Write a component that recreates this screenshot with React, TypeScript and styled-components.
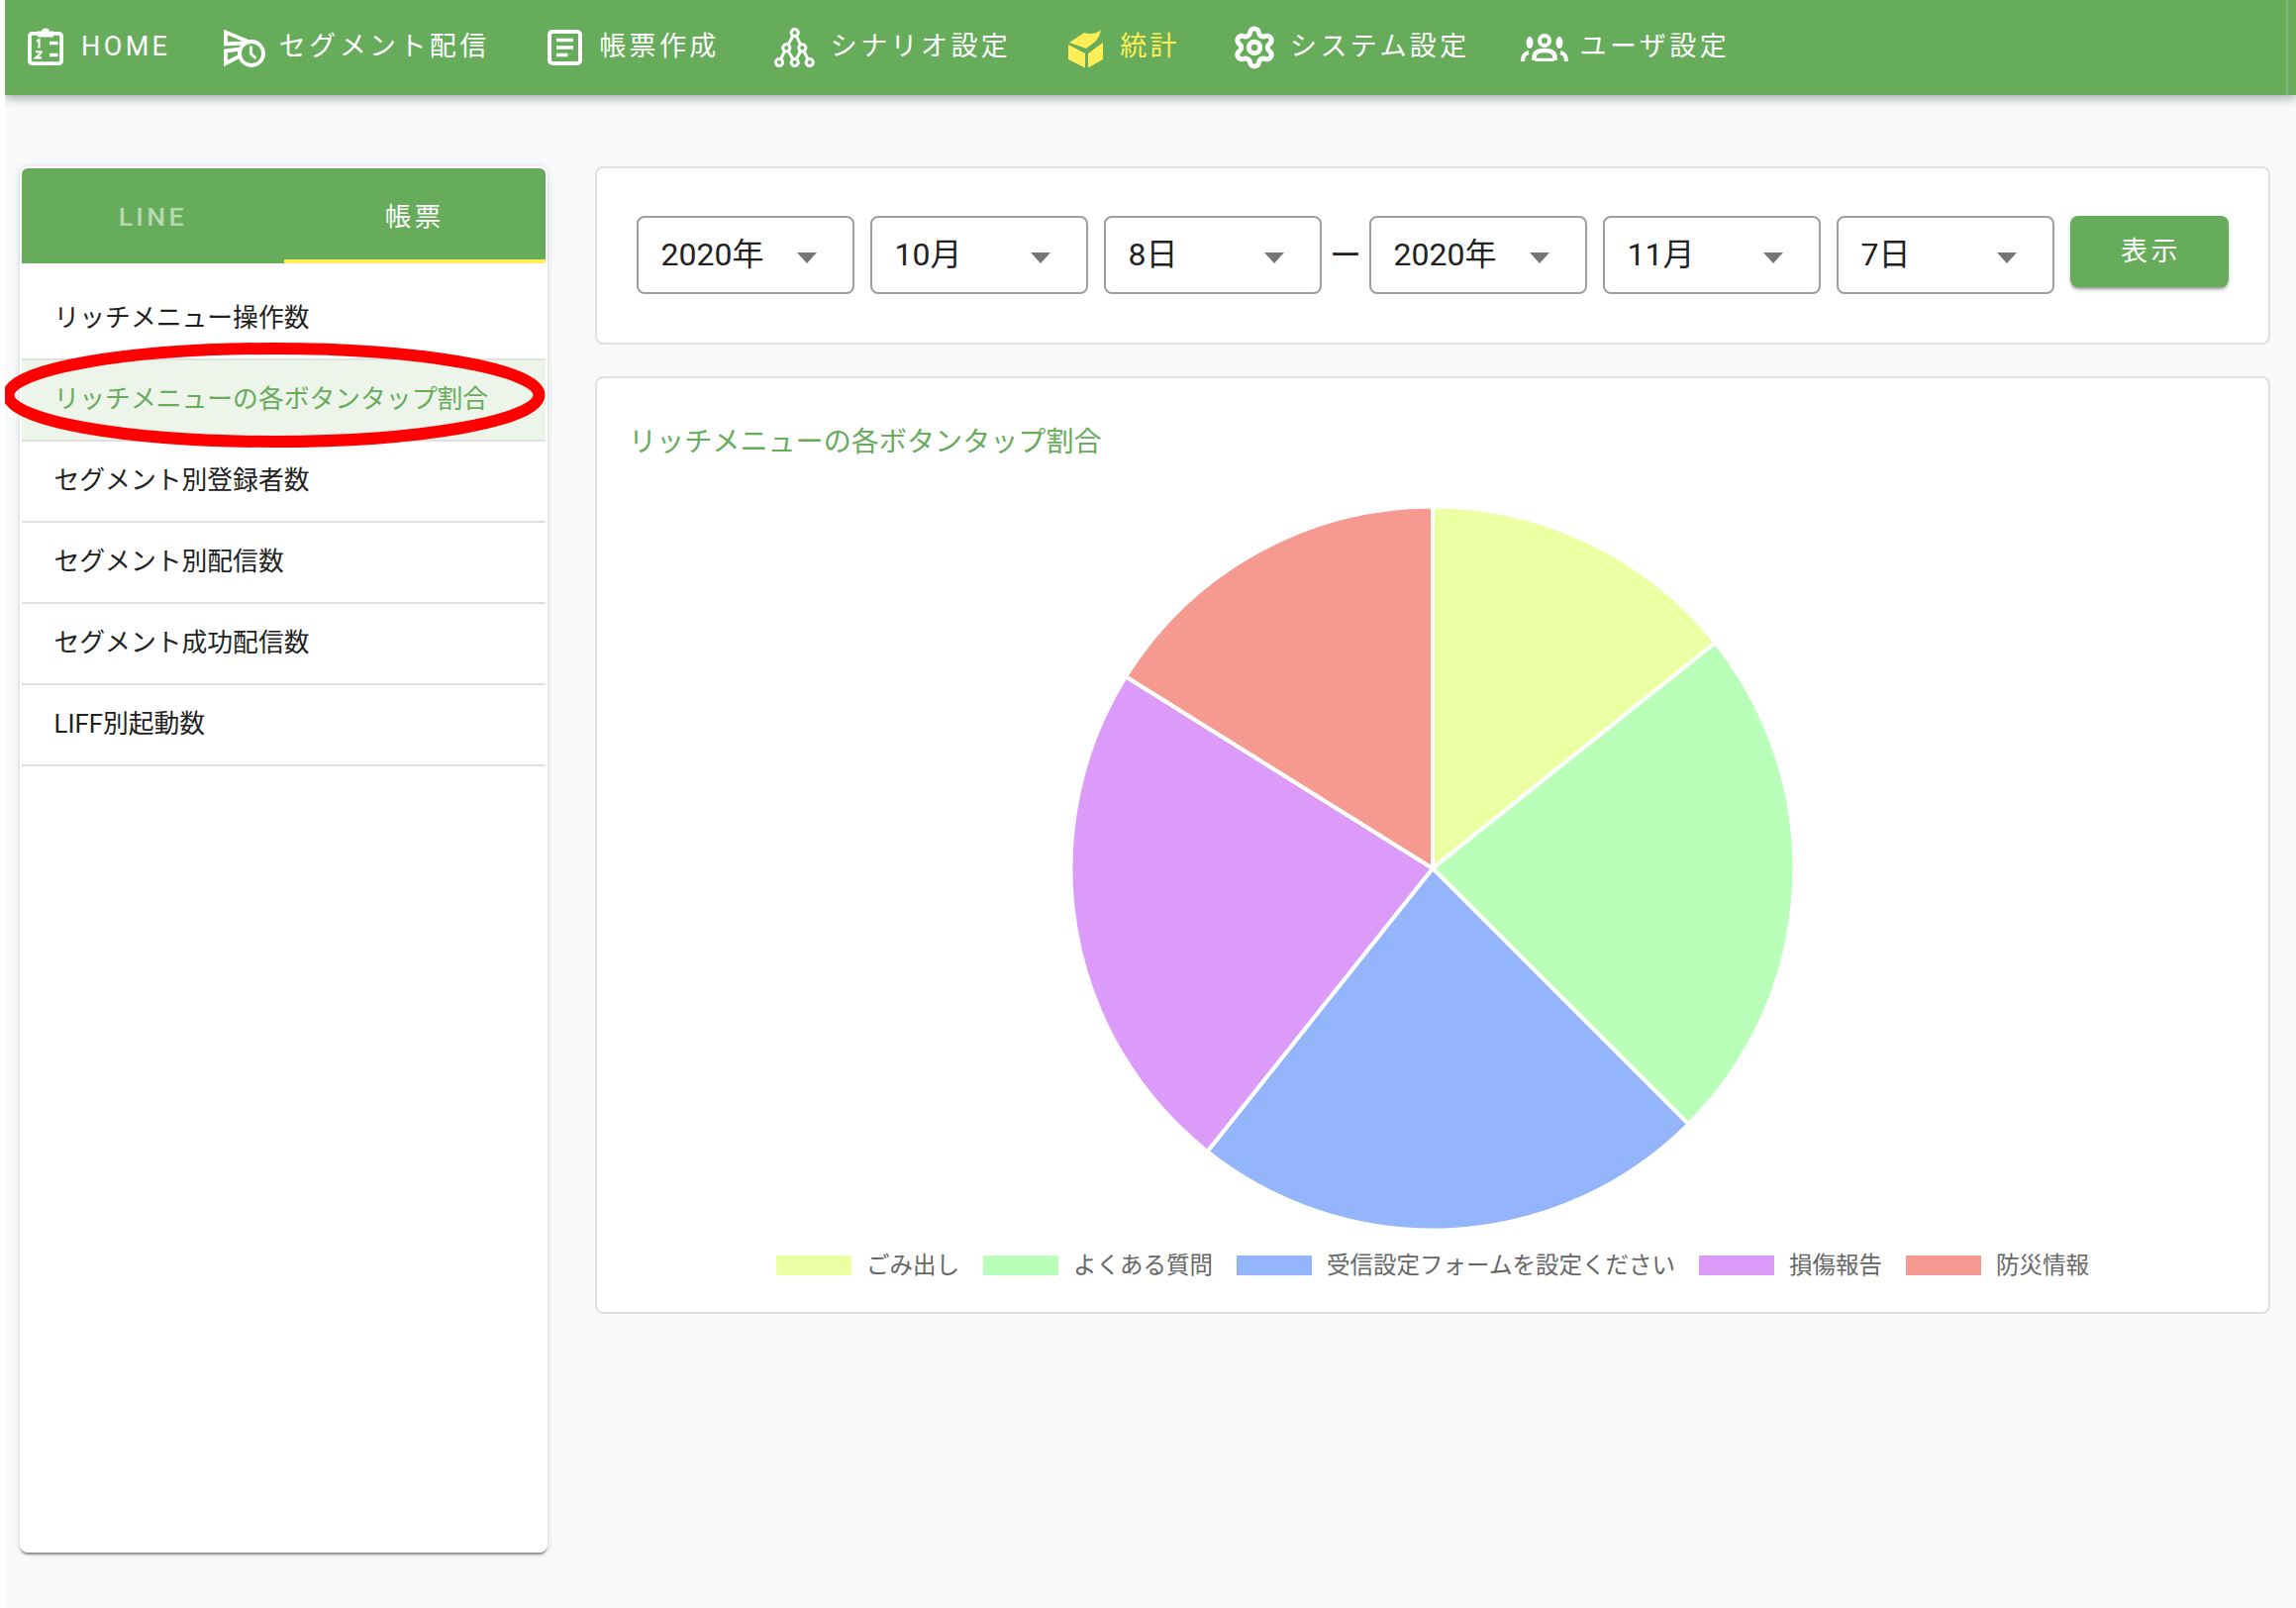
import React from "react";
import styled, { createGlobalStyle } from "styled-components";
import { Settings } from "lucide-react";

const GREEN = "#66ac5b";
const YELLOW = "#ffee58";
const FONT = `Roboto, "Noto Sans CJK JP", sans-serif`;

const Global = createGlobalStyle`
  html, body { margin: 0; padding: 0; background: #fff; }
  body { font-family: ${FONT}; }
  * { box-sizing: border-box; }
`;

const Page = styled.div`
  position: relative;
  margin-left: 5px;
  width: 2314px;
  height: 1624px;
  overflow: hidden;
  background: #f9fafc;
`;

const Header = styled.header`
  height: 96px;
  background: ${GREEN};
  box-shadow: 0 3px 10px rgba(0, 0, 0, 0.35);
`;

const NavInner = styled.nav`
  width: 2306px;
  height: 96px;
  padding-left: 23px;
  display: flex;
  align-items: center;
  border-right: 2px solid rgba(255, 255, 255, 0.16);
`;

const NavItem = styled.div<{ $after: number; $active?: boolean }>`
  display: flex;
  align-items: center;
  margin-right: ${(p) => p.$after}px;
  color: ${(p) => (p.$active ? YELLOW : "#fff")};
`;

const IconBox = styled.span<{ $w: number; $dy?: number }>`
  width: ${(p) => p.$w}px;
  display: flex;
  align-items: center;
  transform: translateY(${(p) => p.$dy ?? 0}px);
  svg { display: block; flex: none; }
`;

const NavLabel = styled.span`
  font-size: 27px;
  letter-spacing: 3.4px;
  line-height: 40px;
  white-space: nowrap;
  transform: translateY(-1px);
`;

const Main = styled.main`
  display: flex;
  align-items: flex-start;
  gap: 48px;
  padding: 72px 0 0 15px;
`;

const Sidebar = styled.aside`
  width: 533px;
  height: 1400px;
  flex: none;
  padding: 2px;
  background: #fff;
  border-radius: 8px;
  box-shadow: 0 3px 2px -1px rgba(0, 0, 0, 0.4), 0 1px 7px rgba(0, 0, 0, 0.16);
`;

const Tabs = styled.div`
  display: flex;
  height: 96px;
  background: ${GREEN};
  border-radius: 6px 6px 0 0;
`;

const Tab = styled.div<{ $active?: boolean }>`
  flex: 1;
  display: flex;
  align-items: center;
  justify-content: center;
  padding-top: ${(p) => (p.$active ? 0 : 5)}px;
  font-size: 26.5px;
  font-weight: ${(p) => (p.$active ? 400 : 500)};
  letter-spacing: 3.4px;
  color: ${(p) => (p.$active ? "#fff" : "rgba(255,255,255,0.55)")};
  border-bottom: 4px solid ${(p) => (p.$active ? YELLOW : "transparent")};
`;

const MenuList = styled.div`
  padding-top: 16px;
`;

const MenuRow = styled.div<{ $active?: boolean }>`
  height: 82px;
  display: flex;
  align-items: center;
  padding: 0 0 8px 32.5px;
  font-size: 25.8px;
  white-space: nowrap;
  color: ${(p) => (p.$active ? GREEN : "#212121")};
  background: ${(p) => (p.$active ? "#edf4ea" : "transparent")};
  border-bottom: 2px solid #e0e0e0;
`;

const Highlight = styled.svg`
  position: absolute;
  left: -5px;
  top: 0;
  pointer-events: none;
`;

const Content = styled.section`
  width: 1692px;
  flex: none;
  display: flex;
  flex-direction: column;
  gap: 32px;
`;

const Card = styled.div`
  background: #fff;
  border: 2px solid #e0e0e0;
  border-radius: 8px;
`;

const FilterCard = styled(Card)`
  height: 180px;
  padding: 48px 0 0 40px;
  display: flex;
  align-items: flex-start;
`;

const DateGroup = styled.div`
  display: flex;
  gap: 16px;
`;

const SelectBox = styled.div`
  width: 220px;
  height: 79px;
  padding: 0 36px 8px 22.5px;
  display: flex;
  align-items: center;
  justify-content: space-between;
  border: 2px solid #9e9e9e;
  border-radius: 8px;
  font-size: 32px;
  color: #212121;
  white-space: nowrap;
`;

const Caret = styled.i`
  width: 0;
  height: 0;
  margin-top: 13px;
  border-left: 10px solid transparent;
  border-right: 10px solid transparent;
  border-top: 11px solid #757575;
`;

const Dash = styled.span`
  width: 48px;
  height: 79px;
  padding-bottom: 6px;
  display: flex;
  align-items: center;
  justify-content: center;
  font-size: 32px;
  color: #212121;
`;

const ShowButton = styled.button`
  width: 160px;
  height: 72px;
  margin-left: 16px;
  padding: 0 0 6px 3px;
  border: 0;
  border-radius: 8px;
  background: ${GREEN};
  color: #fff;
  font-family: ${FONT};
  font-size: 27px;
  letter-spacing: 3.4px;
  box-shadow: 0 3px 3px -1px rgba(0, 0, 0, 0.3), 0 2px 5px rgba(0, 0, 0, 0.16);
`;

const ChartCard = styled(Card)`
  height: 947px;
  padding: 45px 32px 0;
`;

const ChartTitle = styled.h2`
  margin: 0;
  font-size: 28.1px;
  font-weight: 400;
  line-height: 40px;
  color: ${GREEN};
  white-space: nowrap;
`;

const PieWrap = styled.div`
  display: flex;
  justify-content: center;
  margin-top: 40px;
  svg { display: block; }
`;

const Legend = styled.div`
  display: flex;
  justify-content: center;
  gap: 24px;
  margin-top: 11px;
`;

const LegendItem = styled.div`
  display: flex;
  align-items: center;
  gap: 15px;
  height: 40px;
  font-size: 23.5px;
  color: #666;
  white-space: nowrap;
`;

const LegendLabel = styled.span`
  padding-bottom: 5px;
`;

const Swatch = styled.span<{ $c: string }>`
  width: 76px;
  height: 20px;
  background: ${(p) => p.$c};
`;

const HomeIcon = () => (
  <svg width="36" height="40" viewBox="0 0 36 40" fill="none" stroke="currentColor">
    <rect x="1.9" y="7.9" width="32.2" height="30.2" rx="2.5" strokeWidth="3.8" />
    <path d="M11 10.5V6.5h4a3 3 0 0 1 6 0h4v4z" fill="currentColor" strokeWidth="2.2" />
    <path d="M22 17.5h8.5M22 29.5h8.5" strokeWidth="3.4" />
    <path d="M9 15.5l2.5-1.3v8.3" strokeWidth="2.2" />
    <path d="M8 26.2h5.5v1L8 32.4h6" strokeWidth="2.1" />
  </svg>
);

const SegmentIcon = () => (
  <svg width="42" height="40" viewBox="0 0 42 40" fill="none" stroke="currentColor" strokeWidth="3.8">
    <path d="M1.9 2.5L27 13 1.9 14.5z" />
    <path d="M1.9 21.5l15-2-1.5 7.5-13.5 7z" />
    <circle cx="28" cy="24" r="12" fill="#66ac5b" />
    <path d="M27.5 16.5v8l5 4.5" strokeWidth="2.8" />
  </svg>
);

const DocIcon = () => (
  <svg width="35" height="36" viewBox="0 0 35 36" fill="none" stroke="currentColor">
    <rect x="2" y="2" width="31" height="32" rx="3" strokeWidth="4" />
    <path d="M9 10.5h17M9 18h17M9 25.5h11.5" strokeWidth="3.6" />
  </svg>
);

const ScenarioIcon = () => {
  const nodes: [number, number][] = [[20.7, 5], [12.3, 20.3], [28.3, 20.3], [5, 35], [20.7, 35], [35.7, 35]];
  return (
    <svg width="41" height="40" viewBox="0 0 41 40" fill="none" stroke="currentColor" strokeWidth="3">
      <path d="M20.7 5L12.3 20.3 5 35M12.3 20.3L20.7 35M20.7 5l7.6 15.3L35.7 35M28.3 20.3L20.7 35" />
      {nodes.map(([x, y]) => (
        <circle key={`${x}-${y}`} cx={x} cy={y} r="3.6" fill="#66ac5b" />
      ))}
    </svg>
  );
};

const CubeIcon = () => (
  <svg width="35" height="39" viewBox="0 0 35 39" fill="currentColor">
    <path d="M1 13L16 3c6 2 13 1 17-3-1 5-3 10-7 13l-8 6z" />
    <path d="M0 15l17 9v14.5L0 30z" />
    <path d="M20 24l15-11v17l-15 8.5z" />
  </svg>
);

const UsersIcon = () => (
  <svg width="48" height="28" viewBox="0 0 48 28" fill="none" stroke="currentColor">
    <circle cx="24" cy="7" r="5" strokeWidth="4" />
    <ellipse cx="9" cy="9" rx="3.5" ry="6" fill="currentColor" stroke="none" />
    <ellipse cx="39" cy="9" rx="3.5" ry="6" fill="currentColor" stroke="none" />
    <path d="M13.5 27v-3c0-5 4-7 10.5-7s10.5 2 10.5 7v3" strokeWidth="4.5" />
    <path d="M14 26.5h20" strokeWidth="3.5" />
    <path d="M2 28c0-5 2-8 6-9M46 28c0-5-2-8-6-9" strokeWidth="4" />
  </svg>
);

const GearIcon = styled(Settings)`
  margin-left: -4px;
`;

const navItems = [
  { label: "HOME", icon: <HomeIcon />, box: 54, after: 54, dy: -2 },
  { label: "セグメント配信", icon: <SegmentIcon />, box: 55.5, after: 58.5, dy: 2 },
  { label: "帳票作成", icon: <DocIcon />, box: 52, after: 55, dy: 0 },
  { label: "シナリオ設定", icon: <ScenarioIcon />, box: 57, after: 58, dy: 0 },
  { label: "統計", icon: <CubeIcon />, box: 52, after: 56, dy: 1, active: true },
  { label: "システム設定", icon: <GearIcon size={46} strokeWidth={2.6} />, box: 55, after: 51, dy: 0 },
  { label: "ユーザ設定", icon: <UsersIcon />, box: 60, after: 0, dy: 0 },
];

const menu = [
  "リッチメニュー操作数",
  "リッチメニューの各ボタンタップ割合",
  "セグメント別登録者数",
  "セグメント別配信数",
  "セグメント成功配信数",
  "LIFF別起動数",
];

const slices = [
  { name: "ごみ出し", color: "#ebffa3", from: 0, to: 51.4 },
  { name: "よくある質問", color: "#b9ffb9", from: 51.4, to: 135 },
  { name: "受信設定フォームを設定ください", color: "#94b4fb", from: 135, to: 218.5 },
  { name: "損傷報告", color: "#dc9bf9", from: 218.5, to: 302 },
  { name: "防災情報", color: "#f69a91", from: 302, to: 360 },
];

const R = 365.5;
const C = 370;
const point = (deg: number) => {
  const a = (deg * Math.PI) / 180;
  return `${(C + R * Math.sin(a)).toFixed(2)} ${(C - R * Math.cos(a)).toFixed(2)}`;
};

const Pie = () => (
  <svg width="740" height="740" viewBox="0 0 740 740">
    {slices.map((s) => (
      <path
        key={s.name}
        d={`M${C} ${C}L${point(s.from)}A${R} ${R} 0 ${s.to - s.from > 180 ? 1 : 0} 1 ${point(s.to)}Z`}
        fill={s.color}
        stroke="#fff"
        strokeWidth="4"
      />
    ))}
  </svg>
);

const DateSelect = ({ value }: { value: string }) => (
  <SelectBox>
    <span>{value}</span>
    <Caret />
  </SelectBox>
);

export default function App() {
  return (
    <Page>
      <Global />
      <Header>
        <NavInner>
          {navItems.map((n) => (
            <NavItem key={n.label} $after={n.after} $active={n.active}>
              <IconBox $w={n.box} $dy={n.dy}>{n.icon}</IconBox>
              <NavLabel>{n.label}</NavLabel>
            </NavItem>
          ))}
        </NavInner>
      </Header>
      <Main>
        <Sidebar>
          <Tabs>
            <Tab>LINE</Tab>
            <Tab $active>帳票</Tab>
          </Tabs>
          <MenuList>
            {menu.map((m, i) => (
              <MenuRow key={m} $active={i === 1}>{m}</MenuRow>
            ))}
          </MenuList>
        </Sidebar>
        <Content>
          <FilterCard>
            <DateGroup>
              <DateSelect value="2020年" />
              <DateSelect value="10月" />
              <DateSelect value="8日" />
            </DateGroup>
            <Dash>ー</Dash>
            <DateGroup>
              <DateSelect value="2020年" />
              <DateSelect value="11月" />
              <DateSelect value="7日" />
            </DateGroup>
            <ShowButton>表示</ShowButton>
          </FilterCard>
          <ChartCard>
            <ChartTitle>リッチメニューの各ボタンタップ割合</ChartTitle>
            <PieWrap><Pie /></PieWrap>
            <Legend>
              {slices.map((s) => (
                <LegendItem key={s.name}>
                  <Swatch $c={s.color} />
                  <LegendLabel>{s.name}</LegendLabel>
                </LegendItem>
              ))}
            </Legend>
          </ChartCard>
        </Content>
      </Main>
      <Highlight width="560" height="460" viewBox="0 0 560 460">
        <ellipse cx="276.5" cy="399" rx="268" ry="47" fill="none" stroke="#ff0000" strokeWidth="12" />
      </Highlight>
    </Page>
  );
}
